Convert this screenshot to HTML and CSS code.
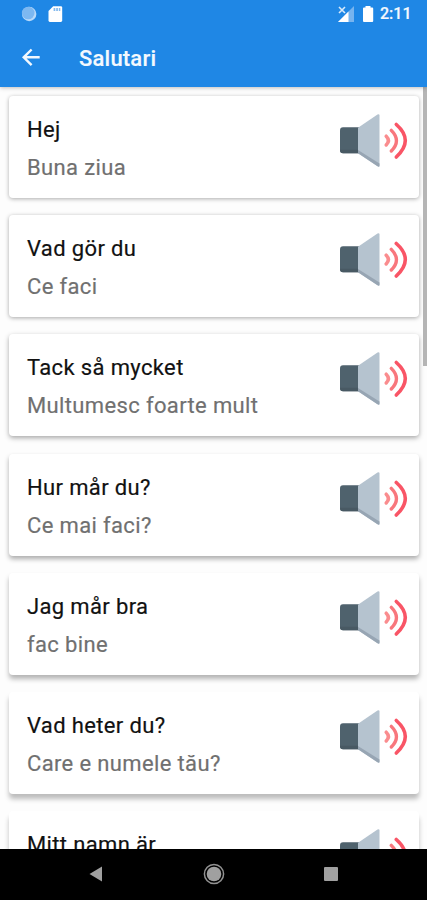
FILE: index.html
```html
<!DOCTYPE html>
<html lang="sv">
<head>
<meta charset="utf-8">
<title>Salutari</title>
<link rel="stylesheet" href="styles.css">
</head>
<body>
<svg class="defs" aria-hidden="true">
  <defs>
    <symbol id="speaker" viewBox="0 0 70 56">
      <path d="M4 14.3H20V40.3H4Q1 40.3 1 37.3V17.3Q1 14.3 4 14.3Z" fill="#4f626d"/>
      <path d="M1 36.8H20V40.3H4Q1 40.3 1 37.3Z" fill="#485963"/>
      <path d="M19 14.8L38.5 1.6Q40.5 0.6 40.5 2.6V52.4Q40.5 54.4 38.5 53.2L19 40.2Z" fill="#b5c3cf"/>
      <path d="M19 37L40.5 50.5V52.4Q40.5 54.4 38.5 53.2L19 40.2Z" fill="#97a5b3"/>
      <g fill="none" stroke-linecap="round">
        <path d="M47.2 23.2Q51.6 27.6 47.2 32" stroke="#fa8c8e" stroke-width="3.5"/>
        <path d="M52.3 17.4Q62.6 27.6 52.3 38" stroke="#f8777d" stroke-width="3.4"/>
        <path d="M57.3 11.5Q75.3 27.4 57.3 44" stroke="#f95566" stroke-width="3.6"/>
      </g>
    </symbol>
  </defs>
</svg>
<div class="screen">
  <header class="header">
    <div class="status">
      <svg class="status-left" width="43" height="18" viewBox="0 0 43 18">
        <circle cx="8.2" cy="9" r="7.2" fill="#b9dafa"/>
        <circle cx="7.2" cy="8" r="6.3" fill="#7db8f1"/>
        <path d="M38.2 1.2H39.8Q41.2 1.2 41.2 2.6V15.6Q41.2 17 39.8 17H28.9Q27.5 17 27.5 15.6V6L32.2 1.2Z" fill="#fff"/>
        <path d="M32.6 3H34.3V6H32.6ZM35.2 3H36.9V6H35.2ZM37.8 3H39.3V6H37.8Z" fill="#83b9ee"/>
      </svg>
      <svg class="status-right" width="36" height="18" viewBox="0 0 36 18">
        <path d="M16 1V17H0Z" fill="#77b4ef"/>
        <path d="M10.5 6.5V17H0Z" fill="#fff"/>
        <path d="M0 0H8V9H0Z" fill="#1f87e5"/>
        <path d="M1 2L7 8M7 2L1 8" stroke="#d7eafb" stroke-width="1.6"/>
        <path d="M27.5 1H32.5V2.5H34.2Q35.2 2.5 35.2 3.5V16Q35.2 17 34.2 17H26Q25 17 25 16V3.5Q25 2.5 26 2.5H27.5Z" fill="#fff"/>
      </svg>
      <span class="clock">2:11</span>
    </div>
    <div class="toolbar">
      <svg class="back" width="20" height="20" viewBox="0 0 20 20"><path d="M18.7 9.3H3M10.6 1.5L2.7 9.3L10.6 17.1" fill="none" stroke="#f2f8fe" stroke-width="2.4"/></svg>
      <h1 class="heading">Salutari</h1>
    </div>
  </header>
  <main class="list">
    <div class="scrollbar"></div>
    <article class="card card-1"><div><p class="phrase">Hej</p><p class="translation">Buna ziua</p></div><svg class="speaker"><use href="#speaker"/></svg></article>
    <article class="card card-2"><div><p class="phrase">Vad gör du</p><p class="translation">Ce faci</p></div><svg class="speaker"><use href="#speaker"/></svg></article>
    <article class="card card-3"><div><p class="phrase">Tack så mycket</p><p class="translation">Multumesc foarte mult</p></div><svg class="speaker"><use href="#speaker"/></svg></article>
    <article class="card card-4"><div><p class="phrase">Hur mår du?</p><p class="translation">Ce mai faci?</p></div><svg class="speaker"><use href="#speaker"/></svg></article>
    <article class="card card-5"><div><p class="phrase">Jag mår bra</p><p class="translation">fac bine</p></div><svg class="speaker"><use href="#speaker"/></svg></article>
    <article class="card card-6"><div><p class="phrase">Vad heter du?</p><p class="translation">Care e numele tău?</p></div><svg class="speaker"><use href="#speaker"/></svg></article>
    <article class="card card-7"><div><p class="phrase">Mitt namn är</p></div><svg class="speaker"><use href="#speaker"/></svg></article>
  </main>
  <nav class="navbar">
    <svg width="14" height="16" viewBox="0 0 14 16"><path d="M13 .5V15.5L.5 8Z" fill="#a0a0a0"/></svg>
    <svg width="22" height="22" viewBox="0 0 22 22"><circle cx="11" cy="11" r="9.6" fill="none" stroke="#929292" stroke-width="1.5"/><circle cx="11" cy="11" r="7.3" fill="#a0a0a0"/></svg>
    <svg width="14" height="14" viewBox="0 0 14 14"><rect width="14" height="14" rx="1" fill="#a0a0a0"/></svg>
  </nav>
</div>
</body>
</html>
```
FILE: styles.css
```css
* { box-sizing: border-box; }
body, h1, p { margin: 0; }
body {
  font-family: Roboto, sans-serif;
  overflow: hidden;
}
.defs { position: absolute; width: 0; height: 0; }
.screen {
  display: flex;
  flex-direction: column;
  width: 427px;
  height: 900px;
  background: #fdfdfd;
}
.header {
  flex: none;
  height: 87px;
  background: #1f87e5;
  color: #f4f9fe;
  box-shadow: 0 1px 4px rgba(0, 0, 0, .25);
  z-index: 1;
}
.status {
  display: flex;
  align-items: center;
  height: 28px;
  padding: 0 16px 1px 21px;
}
.status-right { margin-left: auto; }
.clock {
  width: 31px;
  margin: 1px 0 0 6px;
  font-size: 16px;
  font-weight: 500;
  line-height: 20px;
  -webkit-text-stroke: .2px #f4f9fe;
}
.toolbar {
  display: flex;
  align-items: center;
  height: 59px;
  padding-left: 21px;
}
.heading {
  margin: 2px 0 0 38px;
  font-size: 22px;
  font-weight: 500;
  letter-spacing: .2px;
  line-height: 28px;
  -webkit-text-stroke: .15px #f4f9fe;
}
.list {
  position: relative;
  flex: 1;
  min-height: 0;
  overflow: hidden;
  display: flex;
  flex-direction: column;
  gap: 17.18px;
  padding: 9px 8px 0 9px;
}
.scrollbar {
  position: absolute;
  top: 0;
  right: 0;
  width: 4px;
  height: 279px;
  background: #b5b5b5;
}
.card {
  flex: none;
  display: flex;
  justify-content: space-between;
  height: 102px;
  padding: 19px 10px 0 18px;
  background: #fff;
  border-radius: 4px;
}
.phrase, .translation {
  font-size: 22px;
  letter-spacing: .36px;
  line-height: 30px;
  color: #111;
  white-space: nowrap;
  -webkit-text-stroke: .18px currentColor;
}
.translation { margin-top: 8px; color: #707070; }
.speaker { width: 70px; height: 56px; margin-top: -2px; }
.card-1 { box-shadow: 0 1px 4px rgba(0, 0, 0, .32); }
.card-2 { box-shadow: 0 1px 4px rgba(0, 0, 0, .34); }
.card-3 { box-shadow: 0 2px 5px rgba(0, 0, 0, .34); }
.card-4 { box-shadow: 0 3px 5px rgba(0, 0, 0, .32); }
.card-5 { box-shadow: 0 4px 5px rgba(0, 0, 0, .29); }
.card-6 { box-shadow: 0 5px 5px rgba(0, 0, 0, .26); }
.card-7 { box-shadow: 0 6px 5px rgba(0, 0, 0, .24); }
.navbar {
  flex: none;
  display: flex;
  align-items: center;
  justify-content: space-between;
  height: 51px;
  padding: 0 89px 1px;
  background: #000;
}
```
